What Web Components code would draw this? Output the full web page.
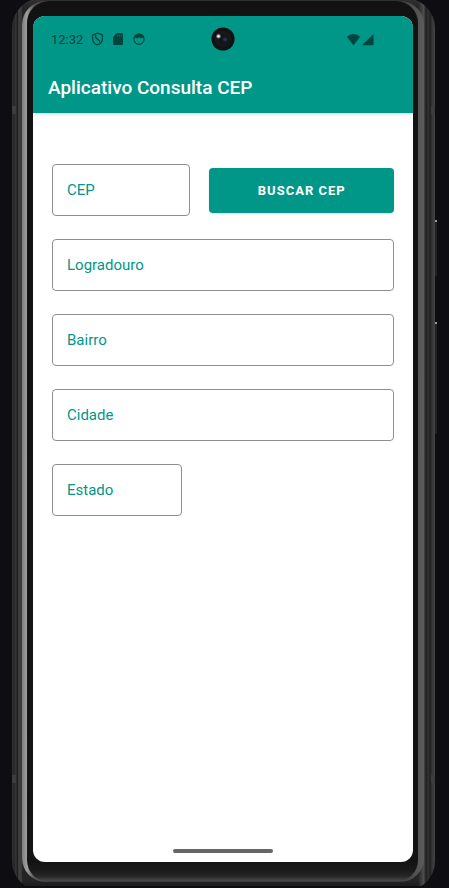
<!DOCTYPE html>
<html lang="pt-BR">
<head>
<meta charset="utf-8">
<meta name="viewport" content="width=device-width, initial-scale=1">
<title>Aplicativo Consulta CEP</title>
<style>
  body { margin: 0; background: #0e0d11; font-family: Roboto, "Noto Sans", sans-serif; --teal: #009788; overflow: hidden; }
</style>
</head>
<body>
<phone-frame>
  <app-header>
    <status-bar slot="status" time="12:32"></status-bar>
    Aplicativo Consulta CEP
  </app-header>
  <cep-form></cep-form>
</phone-frame>

<script>
const define = (name, html, setup) => {
  const template = document.createElement('template');
  template.innerHTML = html;
  customElements.define(name, class extends HTMLElement {
    constructor() {
      super();
      this.attachShadow({ mode: 'open' }).append(template.content.cloneNode(true));
    }
    connectedCallback() { if (setup) setup(this, this.shadowRoot); }
  });
};

define('phone-frame', `
<style>
  :host { display: block; height: 100vh; padding: 0 14px 0 12px; box-sizing: border-box; }
  .body {
    position: relative; box-sizing: border-box; height: calc(100% + 5px); margin-top: -2px;
    padding: 3px 17px 9px 10px; border-radius: 30px;
    background:
      linear-gradient(90deg,
        #303030 0, #262626 3px, #404040 4px, #1c1c1c 5px, #1c1c1c 6px, #5a5a5a 7px, #242424 8px, #505050 9px,
        transparent 10px, transparent calc(100% - 17px),
        #505050 calc(100% - 11px), #2c2c2c calc(100% - 10px), #202020 calc(100% - 8px), #383838 calc(100% - 7px), #1e1e1e calc(100% - 5px), #353535 calc(100% - 3px), #444 100%),
      linear-gradient(#333, #242424 10px, #242424 calc(100% - 10px), #1c1c1c calc(100% - 6px), #2c2c2c);
  }
  .rim {
    height: 100%; box-sizing: border-box; padding: 0 6px 0 5px; margin-right: -6px; border-radius: 24px;
    background: linear-gradient(90deg, #7d7d7d 0, #a0a0a0 5px, #555 12px, #333 50px, #333 calc(100% - 30px), #555 calc(100% - 6px), #5c5c5c 100%);
  }
  .bezel {
    height: 100%; box-sizing: border-box; padding: 15px 5px 20px 6px; border-radius: 22px;
    background: linear-gradient(#121212 0, #131313 calc(100% - 20px), #191919 calc(100% - 12px), #262626 calc(100% - 6px), #484848 calc(100% - 1px), #333 100%);
  }
  .screen { height: 100%; overflow: hidden; border-radius: 12px; background: #fff; display: flex; flex-direction: column; }
  .content { flex: 1; }
  .home { width: 100px; height: 4px; margin: 0 auto 9px; border-radius: 2px; background: #666; }
  .camera { position: absolute; left: 199px; top: 29px; }
  .key { position: absolute; right: -2px; width: 2px; background: #222224; border-top: 2px solid #999; box-sizing: border-box; }
  .power { top: 222px; height: 56px; }
  .volume { top: 324px; height: 112px; }
  .seam { position: absolute; height: 8px; width: 4px; background: #3d3d3d; }
  .s1 { left: 0; top: 108px; } .s2 { left: 0; top: 777px; }
  .s3 { right: 0; top: 108px; } .s4 { right: 0; top: 777px; }
</style>
<div class="body">
  <div class="rim"><div class="bezel"><main class="screen">
    <div class="content"><slot></slot></div>
    <div class="home"></div>
  </main></div></div>
  <svg class="camera" width="24" height="24" viewBox="0 0 24 24" aria-hidden="true">
    <circle cx="12" cy="12" r="11.6" fill="#101112"/>
    <circle cx="12" cy="12" r="8.5" fill="#18181b"/>
    <circle cx="13" cy="13" r="5.5" fill="#15161c"/>
    <circle cx="14" cy="12.5" r="2" fill="#22344f"/>
    <circle cx="7.5" cy="9.3" r="2.2" fill="#77797c"/>
    <circle cx="7.5" cy="9.3" r="1.2" fill="#f2f2f2"/>
  </svg>
  <i class="key power"></i><i class="key volume"></i>
  <i class="seam s1"></i><i class="seam s2"></i><i class="seam s3"></i><i class="seam s4"></i>
</div>`);

define('status-bar', `
<style>
  :host { display: flex; align-items: center; justify-content: space-between; height: 46px; padding: 0 39px 0 18px; color: #00453e; font-size: 13px; }
  .group { display: flex; align-items: center; }
  svg { display: block; fill: currentColor; }
  .left { gap: 8px; }
</style>
<div class="group left">
  <time></time>
  <svg width="13" height="14" viewBox="0 0 13 14" aria-hidden="true">
    <path d="M6.5 1.2 11.4 3v3.7c0 2.9-2 5.2-4.9 6.2-2.9-1-4.9-3.3-4.9-6.2V3z" fill="none" stroke="currentColor" stroke-width="1.3"/>
    <path d="M4.6 2.6v2q0 1.2 1 1.9l2 1.4q1.2.9 1.1 2.6" fill="none" stroke="currentColor" stroke-width="1.3"/>
  </svg>
  <svg width="12" height="14" viewBox="0 0 12 14" aria-hidden="true">
    <path fill-rule="evenodd" d="M5 1h5q1 0 1 1v10q0 1-1 1H2q-1 0-1-1V5zM5.4 3v1.6h.6V3zM7.2 3v1.6h.6V3zM9 3v1.6h.6V3z"/>
  </svg>
  <svg width="14" height="14" viewBox="0 0 14 14" aria-hidden="true">
    <circle cx="7" cy="7.3" r="5.1" fill="none" stroke="currentColor" stroke-width="1.2"/>
    <path d="M1.6 6.2 3 2.8 7 1.4l4 1.4 1.4 3.4-2.2-.7-1.1 1-2.1-1.2-2.1 1.2-1.1-1z"/>
  </svg>
</div>
<div class="group">
  <svg width="28" height="13" viewBox="0 0 28 13" aria-hidden="true">
    <path d="M7.5 12.2.8 3.7Q3.6 1 7.5 1t6.7 2.7z"/>
    <path d="M16 12.2 27.5 1v11.2z"/>
  </svg>
</div>`, (host, root) => { root.querySelector('time').textContent = host.getAttribute('time'); });

define('app-header', `
<style>
  :host { display: block; background: var(--teal); box-shadow: 0 1px 3px #0003; }
  h1 { margin: 0; padding: 14px 15px; font-size: 19px; line-height: 23px; font-weight: 500; color: #fff; }
</style>
<header><slot name="status"></slot><h1><slot></slot></h1></header>`);

define('outlined-field', `
<style>
  :host { display: grid; height: 52px; }
  label, input { grid-area: 1 / 1; }
  label { align-self: center; padding-left: 15px; font-size: 15px; line-height: 20px; color: var(--teal); pointer-events: none; }
  input { box-sizing: border-box; width: 100%; min-width: 0; padding: 0 14px; border: 1px solid #8e8e8e; border-radius: 4px; background: transparent; font: inherit; font-size: 15px; color: #222; outline: none; }
  input:focus { border-color: var(--teal); }
  input:not(:placeholder-shown) + label { visibility: hidden; }
</style>
<input id="field" type="text" placeholder=" "><label for="field"></label>`,
(host, root) => { root.querySelector('label').textContent = host.getAttribute('label'); });

define('action-button', `
<style>
  :host { display: block; }
  button { display: block; width: 100%; height: 45px; border: 0; border-radius: 4px; background: var(--teal); color: #fff; font: inherit; font-size: 13px; font-weight: 700; letter-spacing: 1px; text-transform: uppercase; box-shadow: 0 1px 2px #0002; cursor: pointer; }
</style>
<button type="button"><slot></slot></button>`);

define('cep-form', `
<style>
  :host { display: block; }
  form { display: grid; gap: 23px; padding: 51px 19px; }
  .row { display: grid; grid-template-columns: 3fr 4fr; gap: 19px; align-items: center; }
  .short { width: 38%; }
</style>
<form>
  <div class="row"><outlined-field label="CEP"></outlined-field><action-button>Buscar CEP</action-button></div>
  <outlined-field label="Logradouro"></outlined-field>
  <outlined-field label="Bairro"></outlined-field>
  <outlined-field label="Cidade"></outlined-field>
  <outlined-field class="short" label="Estado"></outlined-field>
</form>`);
</script>
</body>
</html>
